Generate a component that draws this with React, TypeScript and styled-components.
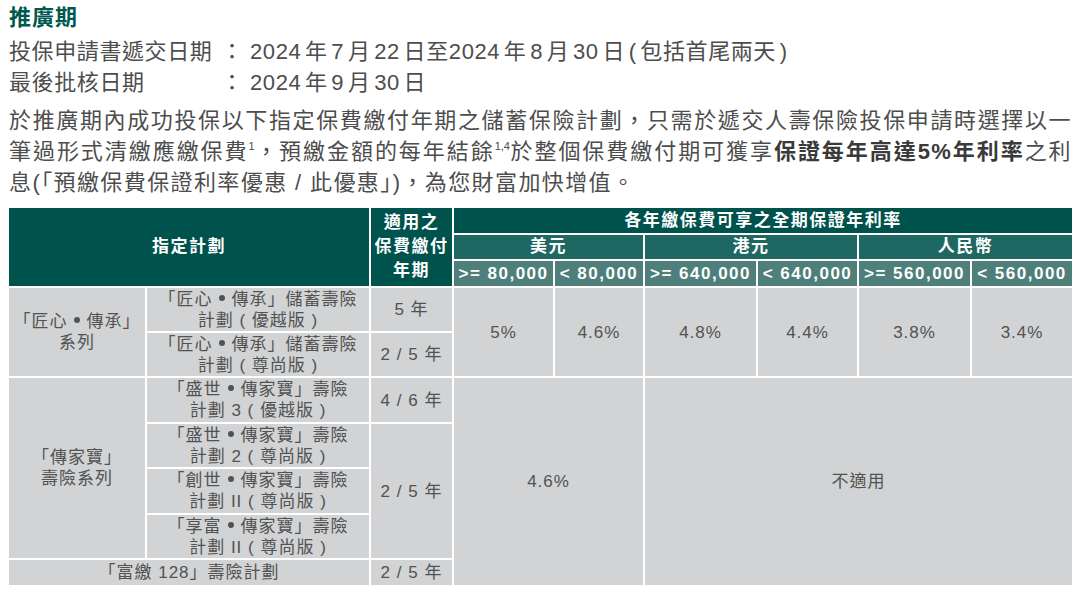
import React from "react";
import styled, { createGlobalStyle } from "styled-components";

const Global = createGlobalStyle`
  html, body { margin: 0; padding: 0; background: #ffffff; }
  * { box-sizing: border-box; }
`;

const FONT = `"Liberation Sans", "Noto Sans CJK TC", sans-serif`;

const Page = styled.div`
  width: 1080px;
  padding: 2px 9px 0 9px;
  font-family: ${FONT};
  color: #4d4d4d;
`;

const Title = styled.h1`
  margin: 0;
  font-size: 22px;
  line-height: 32px;
  font-weight: 700;
  letter-spacing: 1px;
  color: #00594f;
`;

const InfoGrid = styled.div`
  margin-top: 2px;
  display: grid;
  grid-template-columns: 212px 22px 1fr;
  column-gap: 0;
  font-size: 22px;
  line-height: 31px;
  letter-spacing: 0.6px;
`;

const InfoValue = styled.span`
  padding-left: 7px;
  word-spacing: -3px;
`;

const Para = styled.div`
  margin-top: 7px;
  width: 1063px;
  font-size: 22px;
  line-height: 31px;
  letter-spacing: 1.4px;
`;

const Line = styled.span<{ $justify?: boolean }>`
  display: block;
  text-align: ${(p) => (p.$justify ? "justify" : "left")};
  text-align-last: ${(p) => (p.$justify ? "justify" : "left")};
  white-space: nowrap;
`;

const Sup = styled.sup`
  font-size: 11px;
  line-height: 0;
  vertical-align: 9px;
  letter-spacing: 0;
`;

const Strong = styled.b`
  font-weight: 700;
  color: #3a3a3a;
`;

const Table = styled.div`
  margin-top: 10px;
  display: grid;
  grid-template-columns: 136px 222px 81px 99px 88px 111px 99px 111px 100px;
  grid-template-rows: 25px 24px 25px 43px 43px 44px 43px 44px 43px 25px;
  gap: 2px;
  width: 1063px;
`;

const tones = {
  dark: "#00524c",
  mid: "#1f6762",
  light: "#4e7f7b",
};

const HeadCell = styled.div<{ $tone: keyof typeof tones; $c: string; $r: string }>`
  grid-column: ${(p) => p.$c};
  grid-row: ${(p) => p.$r};
  background: ${(p) => tones[p.$tone]};
  color: #ffffff;
  font-weight: 700;
  font-size: 17px;
  line-height: 24px;
  letter-spacing: 1.5px;
  display: flex;
  align-items: center;
  justify-content: center;
  text-align: center;
  white-space: nowrap;
`;

const BodyCell = styled.div<{ $c: string; $r: string }>`
  grid-column: ${(p) => p.$c};
  grid-row: ${(p) => p.$r};
  background: #d1d3d4;
  color: #525252;
  font-size: 17px;
  line-height: 21px;
  letter-spacing: 1px;
  display: flex;
  align-items: center;
  justify-content: center;
  text-align: center;
  white-space: nowrap;
`;

const Dot = styled.span`
  display: inline-block;
  width: 6px;
  height: 6px;
  border-radius: 50%;
  background: #525252;
  vertical-align: 4px;
  margin: 0 7px 0 6px;
`;

type Plan = { c: string; r: string; lines: React.ReactNode[] };

const series = (a: string, b: string, tail = "") => (
  <>
    「{a}
    <Dot />
    {b}」{tail}
  </>
);

const bodyCells: Plan[] = [
  { c: "1", r: "4 / 6", lines: [series("匠心", "傳承"), "系列"] },
  { c: "2", r: "4", lines: [series("匠心", "傳承", "儲蓄壽險"), "計劃 ( 優越版 )"] },
  { c: "2", r: "5", lines: [series("匠心", "傳承", "儲蓄壽險"), "計劃 ( 尊尚版 )"] },
  { c: "3", r: "4", lines: ["5 年"] },
  { c: "3", r: "5", lines: ["2 / 5 年"] },
  { c: "4", r: "4 / 6", lines: ["5%"] },
  { c: "5", r: "4 / 6", lines: ["4.6%"] },
  { c: "6", r: "4 / 6", lines: ["4.8%"] },
  { c: "7", r: "4 / 6", lines: ["4.4%"] },
  { c: "8", r: "4 / 6", lines: ["3.8%"] },
  { c: "9", r: "4 / 6", lines: ["3.4%"] },
  { c: "1", r: "6 / 10", lines: ["「傳家寶」", "壽險系列"] },
  { c: "2", r: "6", lines: [series("盛世", "傳家寶", "壽險"), "計劃 3 ( 優越版 )"] },
  { c: "2", r: "7", lines: [series("盛世", "傳家寶", "壽險"), "計劃 2 ( 尊尚版 )"] },
  { c: "2", r: "8", lines: [series("創世", "傳家寶", "壽險"), "計劃 II ( 尊尚版 )"] },
  { c: "2", r: "9", lines: [series("享富", "傳家寶", "壽險"), "計劃 II ( 尊尚版 )"] },
  { c: "3", r: "6", lines: ["4 / 6 年"] },
  { c: "3", r: "7 / 10", lines: ["2 / 5 年"] },
  { c: "1 / 3", r: "10", lines: ["「富繳 128」壽險計劃"] },
  { c: "3", r: "10", lines: ["2 / 5 年"] },
  { c: "4 / 6", r: "6 / 11", lines: ["4.6%"] },
  { c: "6 / 10", r: "6 / 11", lines: ["不適用"] },
];

const bands = [">= 80,000", "< 80,000", ">= 640,000", "< 640,000", ">= 560,000", "< 560,000"];

const renderLines = (lines: React.ReactNode[]) =>
  lines.map((l, i) => (
    <React.Fragment key={i}>
      {i > 0 && <br />}
      {l}
    </React.Fragment>
  ));

export default function App() {
  return (
    <>
      <Global />
      <Page>
        <Title>推廣期</Title>
        <InfoGrid>
          <span>投保申請書遞交日期</span>
          <span>：</span>
          <InfoValue>2024 年 7 月 22 日至2024 年 8 月 30 日 ( 包括首尾兩天 )</InfoValue>
          <span>最後批核日期</span>
          <span>：</span>
          <InfoValue>2024 年 9 月 30 日</InfoValue>
        </InfoGrid>
        <Para>
          <Line $justify>於推廣期內成功投保以下指定保費繳付年期之儲蓄保險計劃，只需於遞交人壽保險投保申請時選擇以一</Line>
          <Line $justify>
            筆過形式清繳應繳保費<Sup>1</Sup>，預繳金額的每年結餘<Sup>1,4</Sup>於整個保費繳付期可獲享
            <Strong>保證每年高達5%年利率</Strong>之利
          </Line>
          <Line>息(「預繳保費保證利率優惠 / 此優惠」)，為您財富加快增值。</Line>
        </Para>
        <Table>
          <HeadCell $tone="dark" $c="1 / 3" $r="1 / 4">指定計劃</HeadCell>
          <HeadCell $tone="dark" $c="3" $r="1 / 4">
            適用之
            <br />
            保費繳付
            <br />
            年期
          </HeadCell>
          <HeadCell $tone="dark" $c="4 / 10" $r="1">各年繳保費可享之全期保證年利率</HeadCell>
          <HeadCell $tone="mid" $c="4 / 6" $r="2">美元</HeadCell>
          <HeadCell $tone="mid" $c="6 / 8" $r="2">港元</HeadCell>
          <HeadCell $tone="mid" $c="8 / 10" $r="2">人民幣</HeadCell>
          {bands.map((b, i) => (
            <HeadCell key={b} $tone="light" $c={String(4 + i)} $r="3">
              {b}
            </HeadCell>
          ))}
          {bodyCells.map((cell, i) => (
            <BodyCell key={i} $c={cell.c} $r={cell.r}>
              <span>{renderLines(cell.lines)}</span>
            </BodyCell>
          ))}
        </Table>
      </Page>
    </>
  );
}
